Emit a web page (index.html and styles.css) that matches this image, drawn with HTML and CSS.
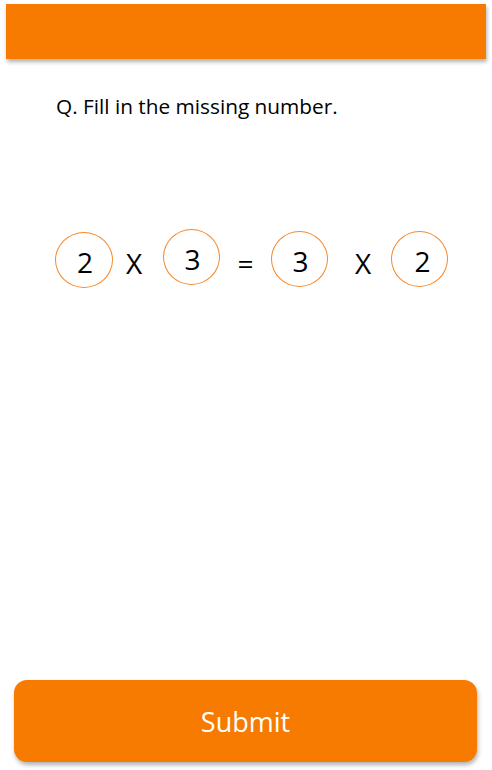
FILE: index.html
```html
<!DOCTYPE html>
<html>
<head>
<meta charset="utf-8">
<link rel="stylesheet" href="styles.css">
</head>
<body>
<div class="page">
  <header class="topbar"></header>
  <p class="question">Q. Fill in the missing number.</p>
  <div class="equation">
    <span class="bubble b1">2</span>
    <span class="op op1">X</span>
    <span class="bubble b2">3</span>
    <span class="op op2">=</span>
    <span class="bubble b3">3</span>
    <span class="op op3">X</span>
    <span class="bubble b4">2</span>
  </div>
  <div class="spacer"></div>
  <button class="submit">Submit</button>
</div>
</body>
</html>
```
FILE: styles.css
```css
html, body {
  margin: 0;
  padding: 0;
  background: #ffffff;
}
.page {
  width: 492px;
  height: 770px;
  display: flex;
  flex-direction: column;
  font-family: "Open Sans", "Liberation Sans", sans-serif;
  color: #000;
}
.topbar {
  margin: 4px 6px 0 6px;
  height: 55px;
  background: #f77b00;
  box-shadow: 1px 3px 4px rgba(0, 0, 0, 0.3);
  flex: none;
}
.question {
  margin: 34px 0 0 56px;
  font-size: 20.8px;
  line-height: 26px;
}
.equation {
  display: flex;
  align-items: flex-start;
  margin-top: 113px;
  padding-left: 55px;
  height: 60px;
}
.bubble {
  box-sizing: border-box;
  width: 57px;
  height: 56px;
  padding-top: 3px;
  padding-left: 2px;
  border: 1px solid #f7882a;
  border-radius: 50%;
  display: flex;
  align-items: center;
  justify-content: center;
  font-size: 28px;
  flex: none;
}
.b1 { width: 58px; }
.b2 { margin-top: -3px; }
.b3 { margin-top: -1px; }
.b4 { margin-top: -1px; padding-left: 6px; }
.op {
  font-size: 28px;
  line-height: 56px;
  text-align: center;
  flex: none;
  box-sizing: border-box;
  padding-top: 3px;
}
.op1 { width: 50px; padding-right: 8px; }
.op2 { width: 51px; }
.op3 { width: 63px; padding-left: 7px; }
.spacer { flex: 1; }
.submit {
  flex: none;
  margin: 0 15px 8px 14px;
  height: 82px;
  border: none;
  border-radius: 13px;
  background: #f77b00;
  color: #ffffff;
  font-family: "Open Sans", "Liberation Sans", sans-serif;
  font-size: 27px;
  box-shadow: 1px 3px 4px rgba(0, 0, 0, 0.3);
  padding: 0;
}
```
